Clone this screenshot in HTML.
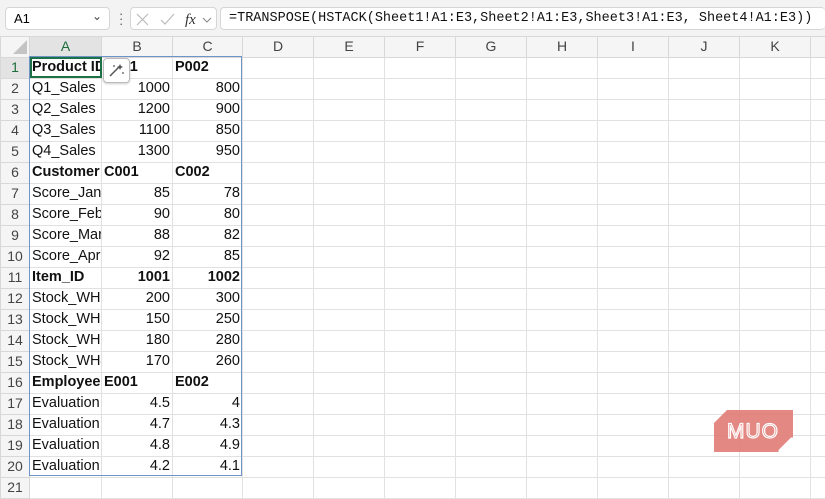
<!DOCTYPE html>
<html><head><meta charset="utf-8"><style>
body{margin:0;width:825px;height:483px;overflow:hidden;background:#fff;font-family:"Liberation Sans",sans-serif;position:relative}
.top{position:absolute;left:0;top:0;width:825px;height:36px;background:#f3f3f3}
.box{position:absolute;top:7px;height:23px;background:#fff;border:1px solid #d6d6d6;border-radius:4px;box-sizing:border-box;overflow:hidden}
table{position:absolute;left:0;top:36px;border-collapse:collapse;table-layout:fixed;width:850px;font-size:14.5px}
tr{height:21px}
tr.hd{height:20px}
td{border:1px solid #e1e1e1;padding:0 2px;line-height:19px;white-space:nowrap;overflow:hidden;color:#111}
td.h{background:#f5f5f5;color:#444;text-align:center;font-size:14px;border-color:#d8d8d8;padding:0}
td.r{text-align:right}
b{font-weight:bold}
</style></head><body>
<div class="top"></div>
<div class="box" style="left:5px;width:105px"><span style="position:absolute;left:8px;top:3px;font-size:13px">A1</span><span style="position:absolute;right:7px;top:1px;font-size:12px;color:#444">&#8964;</span></div>
<div style="position:absolute;left:119px;top:11px;font-size:13px;color:#555;line-height:5px">·<br>·<br>·</div>
<div class="box" style="left:130px;width:87px">
<svg width="87" height="23" style="position:absolute;left:0;top:0"><path d="M6 6l11 11M17 6L6 17" stroke="#bbb" stroke-width="1.2" fill="none"/><path d="M30 12l4 4 9-10" stroke="#bbb" stroke-width="1.2" fill="none"/><text x="54" y="16" font-family="Liberation Serif" font-style="italic" font-size="15" fill="#333">fx</text><path d="M72 10l4 4 4-4" stroke="#888" fill="none"/></svg></div>
<div class="box" style="left:220px;width:605px;border-right:none"><span style="position:absolute;left:8px;top:3px;font-family:'Liberation Mono',monospace;font-size:13.5px;color:#111;white-space:nowrap">=TRANSPOSE(HSTACK(Sheet1!A1:E3,Sheet2!A1:E3,Sheet3!A1:E3, Sheet4!A1:E3))</span></div>
<table>
<colgroup><col style="width:29px"><col style="width:72px"><col style="width:71px"><col style="width:70px"><col style="width:71px"><col style="width:71px"><col style="width:71px"><col style="width:71px"><col style="width:71px"><col style="width:71px"><col style="width:71px"><col style="width:71px"><col style="width:40px"></colgroup>
<tr class="hd"><td class="h"></td><td class="h" style="background:#e3e3e3;color:#1e6b3b;border-bottom:2px solid #1e7145">A</td><td class="h">B</td><td class="h">C</td><td class="h">D</td><td class="h">E</td><td class="h">F</td><td class="h">G</td><td class="h">H</td><td class="h">I</td><td class="h">J</td><td class="h">K</td><td class="h"></td></tr>
<tr><td class="h" style="background:#e3e3e3;color:#1e6b3b">1</td><td style="outline:2px solid #1e7145;outline-offset:-2px"><b>Product ID</b></td><td><b>P001</b></td><td><b>P002</b></td><td></td><td></td><td></td><td></td><td></td><td></td><td></td><td></td><td></td></tr>
<tr><td class="h">2</td><td>Q1_Sales</td><td class="r">1000</td><td class="r">800</td><td></td><td></td><td></td><td></td><td></td><td></td><td></td><td></td><td></td></tr>
<tr><td class="h">3</td><td>Q2_Sales</td><td class="r">1200</td><td class="r">900</td><td></td><td></td><td></td><td></td><td></td><td></td><td></td><td></td><td></td></tr>
<tr><td class="h">4</td><td>Q3_Sales</td><td class="r">1100</td><td class="r">850</td><td></td><td></td><td></td><td></td><td></td><td></td><td></td><td></td><td></td></tr>
<tr><td class="h">5</td><td>Q4_Sales</td><td class="r">1300</td><td class="r">950</td><td></td><td></td><td></td><td></td><td></td><td></td><td></td><td></td><td></td></tr>
<tr><td class="h">6</td><td><b>Customer</b></td><td><b>C001</b></td><td><b>C002</b></td><td></td><td></td><td></td><td></td><td></td><td></td><td></td><td></td><td></td></tr>
<tr><td class="h">7</td><td>Score_Jan</td><td class="r">85</td><td class="r">78</td><td></td><td></td><td></td><td></td><td></td><td></td><td></td><td></td><td></td></tr>
<tr><td class="h">8</td><td>Score_Feb</td><td class="r">90</td><td class="r">80</td><td></td><td></td><td></td><td></td><td></td><td></td><td></td><td></td><td></td></tr>
<tr><td class="h">9</td><td>Score_Mar</td><td class="r">88</td><td class="r">82</td><td></td><td></td><td></td><td></td><td></td><td></td><td></td><td></td><td></td></tr>
<tr><td class="h">10</td><td>Score_Apr</td><td class="r">92</td><td class="r">85</td><td></td><td></td><td></td><td></td><td></td><td></td><td></td><td></td><td></td></tr>
<tr><td class="h">11</td><td><b>Item_ID</b></td><td class="r"><b>1001</b></td><td class="r"><b>1002</b></td><td></td><td></td><td></td><td></td><td></td><td></td><td></td><td></td><td></td></tr>
<tr><td class="h">12</td><td>Stock_WH1</td><td class="r">200</td><td class="r">300</td><td></td><td></td><td></td><td></td><td></td><td></td><td></td><td></td><td></td></tr>
<tr><td class="h">13</td><td>Stock_WH2</td><td class="r">150</td><td class="r">250</td><td></td><td></td><td></td><td></td><td></td><td></td><td></td><td></td><td></td></tr>
<tr><td class="h">14</td><td>Stock_WH3</td><td class="r">180</td><td class="r">280</td><td></td><td></td><td></td><td></td><td></td><td></td><td></td><td></td><td></td></tr>
<tr><td class="h">15</td><td>Stock_WH4</td><td class="r">170</td><td class="r">260</td><td></td><td></td><td></td><td></td><td></td><td></td><td></td><td></td><td></td></tr>
<tr><td class="h">16</td><td><b>Employee</b></td><td><b>E001</b></td><td><b>E002</b></td><td></td><td></td><td></td><td></td><td></td><td></td><td></td><td></td><td></td></tr>
<tr><td class="h">17</td><td>Evaluation</td><td class="r">4.5</td><td class="r">4</td><td></td><td></td><td></td><td></td><td></td><td></td><td></td><td></td><td></td></tr>
<tr><td class="h">18</td><td>Evaluation</td><td class="r">4.7</td><td class="r">4.3</td><td></td><td></td><td></td><td></td><td></td><td></td><td></td><td></td><td></td></tr>
<tr><td class="h">19</td><td>Evaluation</td><td class="r">4.8</td><td class="r">4.9</td><td></td><td></td><td></td><td></td><td></td><td></td><td></td><td></td><td></td></tr>
<tr><td class="h">20</td><td>Evaluation</td><td class="r">4.2</td><td class="r">4.1</td><td></td><td></td><td></td><td></td><td></td><td></td><td></td><td></td><td></td></tr>
<tr><td class="h">21</td><td></td><td></td><td></td><td></td><td></td><td></td><td></td><td></td><td></td><td></td><td></td><td></td></tr>
</table>
<svg width="14" height="14" style="position:absolute;left:13px;top:40px"><path d="M14 0V14H0Z" fill="#c4c4c4"/></svg>
<div style="position:absolute;left:29px;top:56px;width:213px;height:420px;border:1px solid #6d93c9;box-sizing:border-box;pointer-events:none"></div>
<div style="position:absolute;left:103px;top:58px;width:25px;height:23px;background:#fff;border:1px solid #bbb;border-radius:4px;box-shadow:0 1px 2px rgba(0,0,0,.2)"><svg width="25" height="23"><path d="M6 17l9-9" stroke="#555" stroke-width="1.5"/><path d="M16 5l1 2 2 1-2 1-1 2-1-2-2-1 2-1z" fill="#555"/><circle cx="10" cy="7" r="1" fill="#777"/><circle cx="19" cy="14" r="1" fill="#777"/></svg></div>
<svg width="80" height="42" style="position:absolute;left:714px;top:410px"><path d="M13 0H79V27L64 42H0V13Z" fill="#e07b74" opacity=".9"/><path d="M65 41L78 28" stroke="#fff" stroke-width="2"/><text x="39" y="28" text-anchor="middle" font-family="Liberation Sans" font-size="21" fill="none" stroke="#fff" stroke-width="1.2" letter-spacing="1">MUO</text></svg>
</body></html>
